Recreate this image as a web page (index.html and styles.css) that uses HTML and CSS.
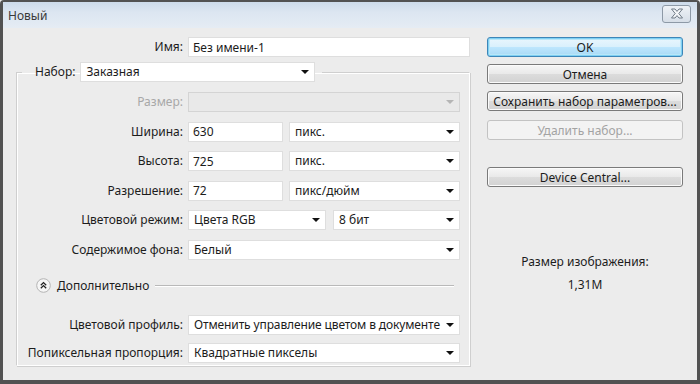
FILE: index.html
```html
<!DOCTYPE html>
<html lang="ru">
<head>
  <meta charset="UTF-8" />
  <title>Новый</title>
  <link rel="stylesheet" href="styles.css">
</head>
<body>
  <div class="window">
    <div class="titlebar">
      <span class="title">Новый</span>
      <div class="close-btn">
        <svg width="16" height="11" viewBox="0 0 16 11">
          <path d="M2.5 1 L6 1 L8 3.4 L10 1 L13.5 1 L9.8 5.5 L13.5 10 L10 10 L8 7.6 L6 10 L2.5 10 L6.2 5.5 Z" fill="#f4f6f8" stroke="#6f7a86" stroke-width="1" stroke-linejoin="round"/>
        </svg>
      </div>
    </div>

    <div class="content">
      <div class="form">
        <div class="name-row">
          <label class="lbl">Имя:</label>
          <input class="field" type="text" value="Без имени-1" />
        </div>

        <fieldset class="preset">
          <legend>
            <label class="lbl">Набор:</label>
            <div class="select preset-select"><span>Заказная</span><i class="arrow"></i></div>
          </legend>

          <div class="rows">
            <label class="lbl disabled">Размер:</label>
            <div class="select off"><span></span><i class="arrow"></i></div>

            <label class="lbl">Ширина:</label>
            <div class="pair">
              <input class="field" type="text" value="630" />
              <div class="select"><span>пикс.</span><i class="arrow"></i></div>
            </div>

            <label class="lbl">Высота:</label>
            <div class="pair">
              <input class="field" type="text" value="725" />
              <div class="select"><span>пикс.</span><i class="arrow"></i></div>
            </div>

            <label class="lbl">Разрешение:</label>
            <div class="pair">
              <input class="field" type="text" value="72" />
              <div class="select"><span>пикс/дюйм</span><i class="arrow"></i></div>
            </div>

            <label class="lbl">Цветовой режим:</label>
            <div class="pair mode">
              <div class="select"><span>Цвета RGB</span><i class="arrow"></i></div>
              <div class="select"><span>8 бит</span><i class="arrow"></i></div>
            </div>

            <label class="lbl">Содержимое фона:</label>
            <div class="select"><span>Белый</span><i class="arrow"></i></div>
          </div>

          <div class="advanced">
            <svg class="toggle" width="15" height="15" viewBox="0 0 15 15">
              <circle cx="7.5" cy="7.5" r="6.8" fill="#f6f6f6" stroke="#b4b4b4" stroke-width="1"/>
              <path d="M4.8 7.2 L7.5 4.6 L10.2 7.2 M4.8 10.2 L7.5 7.6 L10.2 10.2" fill="none" stroke="#222" stroke-width="1.3"/>
            </svg>
            <span class="adv-text">Дополнительно</span>
            <span class="adv-line"></span>
          </div>

          <div class="rows extra">
            <label class="lbl">Цветовой профиль:</label>
            <div class="select tight"><span>Отменить управление цветом в документе</span><i class="arrow"></i></div>

            <label class="lbl">Попиксельная пропорция:</label>
            <div class="select"><span>Квадратные пикселы</span><i class="arrow"></i></div>
          </div>
        </fieldset>
      </div>

      <div class="side">
        <button class="btn default">OK</button>
        <button class="btn">Отмена</button>
        <button class="btn">Сохранить набор параметров...</button>
        <button class="btn" disabled>Удалить набор...</button>
        <button class="btn device">Device Central...</button>

        <div class="size-info">
          <div>Размер изображения:</div>
          <div class="size-value">1,31M</div>
        </div>
      </div>
    </div>
  </div>
</body>
</html>
```

FILE: styles.css
```css
body {
  margin: 0;
  font-family: 'Noto Sans', 'Open Sans', sans-serif;
  font-size: 12px;
  color: #1c1c1c;
  background: #ececec;
}

.window {
  width: 700px;
  height: 384px;
  box-sizing: border-box;
  border: 3px solid #525252;
  border-top-width: 2px;
  border-bottom-width: 4px;
  border-radius: 4px 4px 0 0;
  background: #ececec;
}

.titlebar {
  height: 26px;
  display: flex;
  align-items: center;
  justify-content: space-between;
  padding: 0 6px 0 5px;
  background: linear-gradient(#cddbea, #dce6f1 40%, #e5ecf4);
}

.title {
  color: #3a3a3a;
  font-size: 12px;
}

.close-btn {
  width: 27px;
  height: 16px;
  margin-top: -3px;
  display: flex;
  align-items: center;
  justify-content: center;
  border: 1px solid #8d99a6;
  border-radius: 3px;
  background: linear-gradient(#eef2f6, #d6dee7);
}

.content {
  display: flex;
  padding-top: 9px;
}

.form {
  width: 467px;
}

.lbl {
  text-align: right;
  line-height: 20px;
  white-space: nowrap;
}

.lbl.disabled {
  color: #a8a8a8;
}

.name-row {
  display: grid;
  grid-template-columns: 180px 282px;
  column-gap: 5px;
}

.field {
  height: 20px;
  box-sizing: border-box;
  margin: 0;
  padding: 0 4px;
  border: 1px solid #dedede;
  background: #fff;
  font: inherit;
  color: #1c1c1c;
  outline: none;
}

.select {
  position: relative;
  height: 20px;
  box-sizing: border-box;
  padding: 0 18px 0 5px;
  border: 1px solid #dedede;
  background: #fff;
  line-height: 18px;
  white-space: nowrap;
  overflow: hidden;
}

.select.tight {
  letter-spacing: -0.12px;
}

.select .arrow {
  position: absolute;
  right: 5px;
  top: 7px;
  width: 0;
  height: 0;
  border-left: 4px solid transparent;
  border-right: 4px solid transparent;
  border-top: 4px solid #111;
}

.select.off {
  background: #e9e9e9;
  border-color: #d4d4d4;
}

.select.off .arrow {
  border-top-color: #b5b5b5;
}

.preset {
  margin: 5px 0 0 13px;
  padding: 10px 5px 2px 0;
  border: 1px solid;
  border-color: #cfcfcf #ffffff #ffffff #cfcfcf;
  box-shadow: inset 1px 1px 0 #fff, 1px 1px 0 #cfcfcf;
  min-width: 0;
}

.preset legend {
  display: flex;
  gap: 5px;
  margin-left: 5px;
  padding: 0 7px 0 13px;
}

.preset-select {
  width: 235px;
}

.rows {
  display: grid;
  grid-template-columns: 166px 272px;
  column-gap: 5px;
  row-gap: 9.5px;
}

.pair {
  display: grid;
  grid-template-columns: 95px 171px;
  column-gap: 6px;
}

.pair.mode {
  grid-template-columns: 138px 127px;
  column-gap: 7px;
}

.advanced {
  display: flex;
  align-items: center;
  height: 20px;
  margin: 16px 10px 0 19px;
}

.toggle {
  flex: none;
}

.adv-text {
  margin-left: 6px;
}

.adv-line {
  flex: 1;
  height: 1px;
  margin-left: 6px;
  background: #b9b9b9;
  box-shadow: 0 1px 0 #fff;
}

.rows.extra {
  margin-top: 19px;
  row-gap: 8px;
}

.side {
  width: 196px;
  margin-left: 17px;
  display: flex;
  flex-direction: column;
}

.btn {
  height: 20px;
  margin: 0 0 7px;
  padding: 0;
  border: 1px solid #7a7a7a;
  border-radius: 3px;
  background: linear-gradient(#f6f6f6, #e9e9e9 50%, #dcdcdc 51%, #d2d2d2);
  font: inherit;
  color: #1c1c1c;
  box-shadow: inset 0 0 0 1px #fbfbfb;
}

.btn.default {
  border-color: #3c86b8;
  box-shadow: inset 0 0 0 1px #7fd0f3, inset 0 0 0 2px #b8e6f8;
  background: linear-gradient(#eaf6fd, #d9f0fc 50%, #bee6fd 51%, #a7d9f5);
}

.btn:nth-child(3) {
  margin-bottom: 9px;
}

.btn:disabled {
  border-color: #c3c3c3;
  background: #f3f3f3;
  color: #a3a3a3;
  box-shadow: none;
}

.btn.device {
  margin-top: 20px;
}

.size-info {
  margin-top: 56px;
  text-align: center;
  line-height: 23px;
}
```
